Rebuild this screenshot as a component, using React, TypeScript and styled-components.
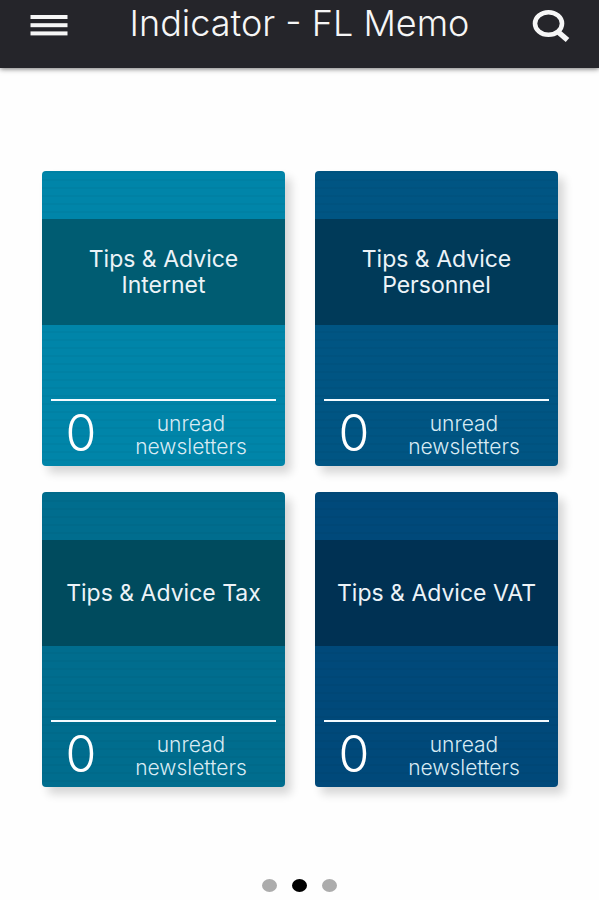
import React from 'react';
import styled, { createGlobalStyle } from 'styled-components';

const GlobalStyle = createGlobalStyle`
  *, *::before, *::after {
    box-sizing: border-box;
  }
  body {
    margin: 0;
    background: #fefefe;
    font-family: Inter, "Liberation Sans", Arial, sans-serif;
  }
`;

const Screen = styled.div`
  display: flex;
  flex-direction: column;
  min-height: 100vh;
`;

const Header = styled.header`
  display: flex;
  align-items: flex-start;
  justify-content: space-between;
  height: 68px;
  padding: 4px 28px 0;
  background: #25252a;
  color: #f6f6f6;
  box-shadow: 0 1px 5px rgba(0, 0, 0, 0.55);
`;

const IconButton = styled.button`
  display: flex;
  align-items: center;
  justify-content: center;
  width: 42px;
  height: 44px;
  padding: 0;
  border: 0;
  background: transparent;
  color: inherit;
  cursor: pointer;
`;

const Title = styled.h1`
  margin: 0;
  font-size: 36px;
  font-weight: 300;
  line-height: 38px;
  white-space: nowrap;
`;

const Shelf = styled.main`
  display: grid;
  grid-template-columns: repeat(2, minmax(0, 1fr));
  gap: 26px 30px;
  padding: 103px 41px 0 42px;
`;

const Card = styled.a<{ $color: string }>`
  display: flex;
  flex-direction: column;
  padding-top: 48px;
  border-radius: 4px;
  background: repeating-linear-gradient(
      to bottom,
      rgba(0, 0, 0, 0.03) 0 2px,
      transparent 2px 8px
    )
    ${({ $color }) => $color};
  box-shadow: 6px 7px 10px rgba(0, 0, 0, 0.16);
  color: #fff;
  text-decoration: none;
`;

const Band = styled.h2<{ $color: string }>`
  display: flex;
  align-items: center;
  justify-content: center;
  min-height: 106px;
  margin: 0;
  padding: 0 16px;
  background: ${({ $color }) => $color};
  color: #ecf3f8;
  font-size: 23px;
  font-weight: 400;
  line-height: 26px;
  text-align: center;
`;

const Unread = styled.div`
  display: grid;
  grid-template-columns: 60px 1fr;
  align-items: center;
  margin: 74px 9px 0;
  padding: 3px 0;
  border-top: 2px solid #f4fbff;
`;

const Count = styled.span`
  font-size: 50px;
  font-weight: 300;
  line-height: 59px;
  text-align: center;
`;

const Caption = styled.span`
  padding: 3px 5px 0 0;
  color: #d9ebf4;
  font-size: 21px;
  font-weight: 300;
  line-height: 23px;
  text-align: center;
`;

const Pager = styled.nav`
  display: flex;
  justify-content: center;
  gap: 15px;
  margin-top: auto;
  padding: 24px 0 8px;
`;

const Dot = styled.button<{ $active: boolean }>`
  width: 15px;
  height: 13px;
  padding: 0;
  border: 0;
  border-radius: 50%;
  background: ${({ $active }) => ($active ? '#000' : '#acacac')};
  cursor: pointer;
`;

const newsletters = [
  { topic: 'Internet', split: true, color: '#0085a9', band: '#005c72', unread: 0 },
  { topic: 'Personnel', split: true, color: '#005583', band: '#003a59', unread: 0 },
  { topic: 'Tax', split: false, color: '#006d8e', band: '#004b5e', unread: 0 },
  { topic: 'VAT', split: false, color: '#00497a', band: '#003153', unread: 0 },
];

const MenuIcon = () => (
  <svg width="38" height="24" viewBox="0 0 38 24" fill="currentColor" aria-hidden="true">
    <rect x="0.5" y="1" width="37" height="4" />
    <rect x="0.5" y="9.2" width="37" height="4" />
    <rect x="0.5" y="17.4" width="37" height="4" />
  </svg>
);

const SearchIcon = () => (
  <svg width="40" height="34" viewBox="0 0 40 34" fill="none" stroke="currentColor" aria-hidden="true">
    <ellipse cx="18.5" cy="14.5" rx="13.5" ry="11.3" strokeWidth="4.6" />
    <path d="M27 22 37.5 31" strokeWidth="5.5" />
  </svg>
);

export default function App() {
  const [page, setPage] = React.useState(1);

  return (
    <>
      <GlobalStyle />
      <Screen>
        <Header>
          <IconButton type="button" aria-label="Menu">
            <MenuIcon />
          </IconButton>
          <Title>Indicator - FL Memo</Title>
          <IconButton type="button" aria-label="Search">
            <SearchIcon />
          </IconButton>
        </Header>
        <Shelf>
          {newsletters.map(({ topic, split, color, band, unread }) => (
            <Card key={topic} href={`#${topic.toLowerCase()}`} $color={color}>
              <Band $color={band}>
                <span>
                  Tips &amp; Advice{split ? <br /> : ' '}
                  {topic}
                </span>
              </Band>
              <Unread>
                <Count>{unread}</Count>
                <Caption>
                  unread
                  <br />
                  newsletters
                </Caption>
              </Unread>
            </Card>
          ))}
        </Shelf>
        <Pager aria-label="Pages">
          {[0, 1, 2].map((index) => (
            <Dot
              key={index}
              type="button"
              aria-label={`Page ${index + 1}`}
              $active={index === page}
              onClick={() => setPage(index)}
            />
          ))}
        </Pager>
      </Screen>
    </>
  );
}
